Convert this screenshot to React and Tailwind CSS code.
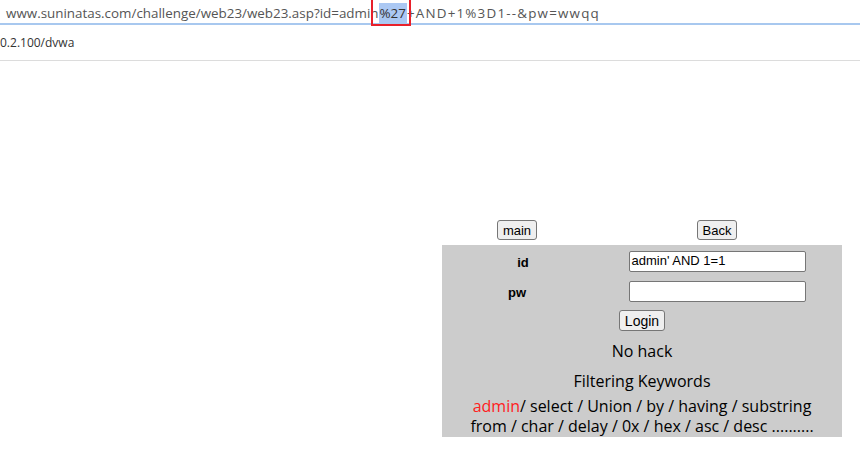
import React from 'react';

const btn = "h-[20px] px-[5px] border border-[#767676] rounded-[3px] bg-[#efefef] text-[13px] leading-none text-black font-['Liberation_Sans',Arial,sans-serif]";

const App = () => {
  return (
    <div className="w-[860px] h-[455px] bg-white overflow-hidden font-['Open_Sans',sans-serif]">
      <div className="h-[25px] border-b-2 border-[#a8c8ef] flex items-center pt-[3px] pl-[6px] text-[13.4px] text-[#555] whitespace-nowrap">
        <span>www.suninatas.com/challenge/web23/web23.asp?id=admin</span>
        <span className="relative bg-[#abc8f3] text-[#333] px-[1px]">
          %27
          <span className="absolute -left-[8px] -right-[4px] -top-[5px] -bottom-[3px] border-2 border-[#e8202a]"></span>
        </span>
        <span className="tracking-[1.2px]">+AND+1%3D1--&amp;pw=wwqq</span>
      </div>
      <div className="h-[36px] border-b border-[#dcdcdc] flex items-center text-[12px] text-[#333]">
        0.2.100/dvwa
      </div>
      <div className="pt-[159px] pl-[442px]">
        <div className="w-[400px]">
          <div className="flex h-[25px] items-start">
            <div className="w-[150px] flex justify-center"><button className={btn}>main</button></div>
            <div className="w-[250px] flex justify-center"><button className={btn}>Back</button></div>
          </div>
          <div className="bg-[#cccccc] h-[192px] flex flex-col">
            <div className="flex h-[31px] items-center pt-[1px]">
              <div className="w-[150px] text-center pl-[12px] pt-[3px] font-bold text-[13px] font-['Liberation_Sans',Arial,sans-serif]">id</div>
              <div className="w-[250px] flex justify-center">
                <div className="w-[177px] h-[21px] bg-white border border-[#767676] rounded-[2px] text-[13px] pl-[2px] flex items-center font-['Liberation_Sans',Arial,sans-serif]">admin' AND 1=1</div>
              </div>
            </div>
            <div className="flex h-[31px] items-center">
              <div className="w-[150px] text-center pt-[3px] font-bold text-[13px] font-['Liberation_Sans',Arial,sans-serif]">pw</div>
              <div className="w-[250px] flex justify-center">
                <div className="w-[177px] h-[21px] bg-white border border-[#767676] rounded-[2px]"></div>
              </div>
            </div>
            <div className="flex justify-center h-[27px] items-center">
              <button className={btn + " text-[14px] h-[21px]"}>Login</button>
            </div>
            <div className="text-center text-[16px] leading-[24px] mt-[5px] text-black">No hack</div>
            <div className="text-center text-[16px] leading-[24px] mt-[6px] text-black">Filtering Keywords</div>
            <div className="text-center text-[16px] leading-[20px] mt-[3px] text-black">
              <span className="text-[#ff2020]">admin</span>/ select / Union / by / having / substring<br />
              from / char / delay / 0x / hex / asc / desc ..........
            </div>
          </div>
        </div>
      </div>
    </div>
  );
};

export default App;
